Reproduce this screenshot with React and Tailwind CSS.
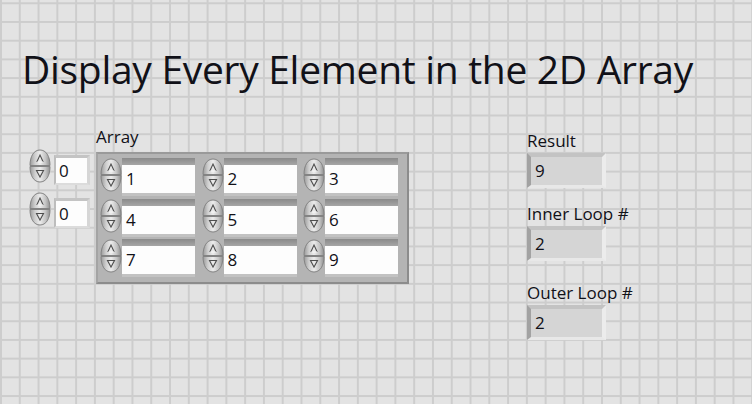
import React from 'react';

// small LabVIEW-style increment/decrement button
const Spinner = ({ className = '' }) => (
    <svg width="22" height="34" viewBox="0 0 22 34" className={`shrink-0 ${className}`}>
        <defs>
            <linearGradient id="spinFill" x1="0" y1="0" x2="1" y2="0">
                <stop offset="0" stopColor="#9a9a9a" />
                <stop offset="0.25" stopColor="#cfcfcf" />
                <stop offset="0.5" stopColor="#ececec" />
                <stop offset="0.78" stopColor="#c4c4c4" />
                <stop offset="1" stopColor="#8f8f8f" />
            </linearGradient>
        </defs>
        <path d="M1 16.5 C1 7 5 1 11 1 C17 1 21 7 21 16.5 Z" fill="url(#spinFill)" stroke="#838383" strokeWidth="1" />
        <path d="M1 17.5 L21 17.5 C21 27 17 33 11 33 C5 33 1 27 1 17.5 Z" fill="url(#spinFill)" stroke="#838383" strokeWidth="1" />
        <path d="M7.8 13 L11 6 L14.2 13" fill="none" stroke="#4e4e4e" strokeWidth="1.1" />
        <path d="M8.3 13 L14.2 13" fill="none" stroke="#f7f7f7" strokeWidth="1" />
        <path d="M7.5 21.5 L14.5 21.5 L11 28 Z" fill="none" stroke="#4e4e4e" strokeWidth="1.1" />
    </svg>
);

const IndexControl = ({ value }) => (
    <div className="flex items-start h-[43px]">
        <Spinner />
        <div className="ml-[3px] mt-[6px] w-[36px] h-[30px] border-t-[3px] border-l-[2px] border-r-[3px] border-b-[2px] border-t-[#c4c4c4] border-l-[#bdbdbd] border-r-[#d6d6d6] border-b-[#dcdcdc]">
            <div className="h-full bg-[#fdfdfd] pl-[3px] text-[17px] leading-[25px]">{value}</div>
        </div>
    </div>
);

const ArrayCell = ({ value }) => (
    <div className="flex items-start w-[101.5px] h-[40.5px] pl-[2px]">
        <Spinner className="mt-[2px]" />
        <div className="mt-[2px] w-[73px] flex flex-col">
            <div className="h-[7px] bg-gradient-to-b from-[#8a8a8a] to-[#a6a6a6]" />
            <div className="h-[28px] bg-[#fdfdfd] pl-[4px] text-[17px] leading-[27px]">{value}</div>
            <div className="h-[3px] bg-[#c2c2c2]" />
        </div>
    </div>
);

const Indicator = ({ label, value, top }) => (
    <div className={top}>
        <div className="text-[17px] leading-[22px]">{label}</div>
        <div className="mt-[1px] w-[79px] h-[35px] border-l-[4px] border-t-[4px] border-r-[4px] border-b-[3px] border-l-[#a2a2a2] border-t-[#c3c3c3] border-r-[#ececec] border-b-[#e8e8e8] bg-[#d5d5d5] pl-[4px] text-[17px] leading-[27px]">
            {value}
        </div>
    </div>
);

export default function App() {
    const rows = [[1, 2, 3], [4, 5, 6], [7, 8, 9]];

    return (
        <div className="w-[752px] h-[404px] overflow-hidden bg-[#e3e3e3] bg-[linear-gradient(to_right,#cdcdcd_2px,transparent_2px),linear-gradient(to_bottom,#cdcdcd_2px,transparent_2px)] bg-[size:18.79px_18.71px] bg-[position:0px_2.3px] font-['Open_Sans',sans-serif] text-[#111118]">
            {/* Title */}
            <h1 className="pl-[22px] pt-[47px] text-[39px] leading-[44px] tracking-[-0.3px] whitespace-nowrap">
                Display Every Element in the 2D Array
            </h1>

            <div className="flex items-start mt-[35px]">
                {/* Index controls */}
                <div className="ml-[29px] mt-[23px] flex flex-col">
                    <IndexControl value="0" />
                    <IndexControl value="0" />
                </div>

                {/* Array */}
                <div className="ml-[6px] flex flex-col">
                    <div className="text-[17px] leading-[22px]">Array</div>
                    <div className="mt-[4px] w-[313px] h-[132px] bg-[#b4b4b4] border-[2px] border-t-[#9a9a9a] border-l-[#a4a4a4] border-r-[#8c8c8c] border-b-[#8c8c8c] pt-[2px]">
                        {rows.map((row, i) => (
                            <div key={i} className="flex">
                                {row.map((v) => (
                                    <ArrayCell key={v} value={v} />
                                ))}
                            </div>
                        ))}
                    </div>
                </div>

                {/* Indicators */}
                <div className="ml-[118px] flex flex-col">
                    <Indicator label="Result" value="9" top="mt-[4px]" />
                    <Indicator label="Inner Loop #" value="2" top="mt-[15px]" />
                    <Indicator label="Outer Loop #" value="2" top="mt-[21px]" />
                </div>
            </div>
        </div>
    );
}
